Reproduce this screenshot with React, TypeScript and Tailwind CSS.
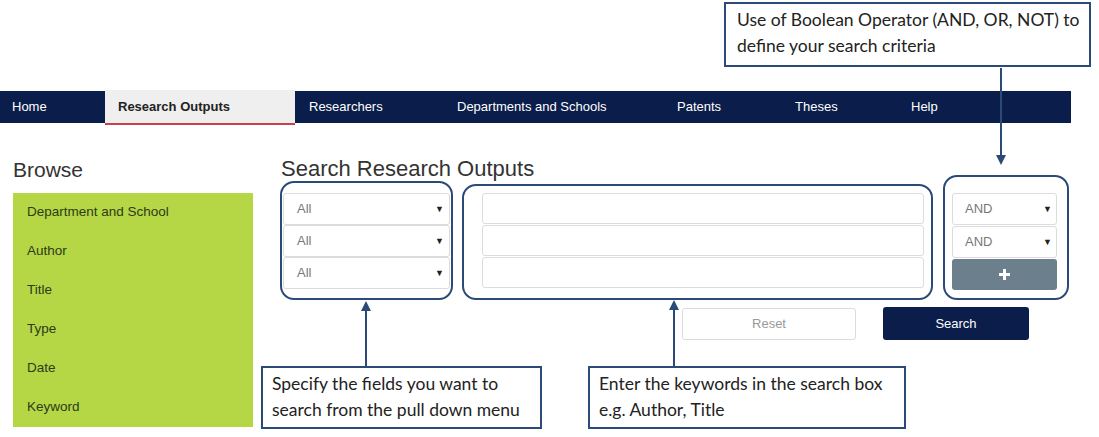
import React from "react";

const navItems = [
  { label: "Home", w: 105, pl: 12 },
  { label: "Research Outputs", w: 190, pl: 13, active: true },
  { label: "Researchers", w: 148, pl: 14 },
  { label: "Departments and Schools", w: 224, pl: 14 },
  { label: "Patents", w: 118, pl: 10 },
  { label: "Theses", w: 116, pl: 10 },
  { label: "Help", w: 156, pl: 10 },
];

const browse = ["Department and School", "Author", "Title", "Type", "Date", "Keyword"];

function Caret() {
  return <span className="text-[9px] text-[#222] leading-none">▼</span>;
}

function SelectRow({ label, pl = "pl-[13px]", pr = "pr-[5px]" }: { label: string; pl?: string; pr?: string }) {
  return (
    <div className={`h-[32px] flex items-center justify-between ${pl} ${pr} bg-white border border-[#dcdcdc] rounded-[3px] text-[13px] text-[#777]`}>
      <span>{label}</span>
      <Caret />
    </div>
  );
}

function ArrowUp({ x, y1, y2 }: { x: number; y1: number; y2: number }) {
  return (
    <svg className="absolute left-0 top-0 pointer-events-none" width="1099" height="437">
      <line x1={x} y1={y2} x2={x} y2={y1 + 8} stroke="#2b4a78" strokeWidth="2" />
      <polygon points={`${x - 5},${y1 + 10} ${x + 5},${y1 + 10} ${x},${y1}`} fill="#2b4a78" />
    </svg>
  );
}

export default function App() {
  return (
    <div className="relative w-[1099px] h-[437px] bg-white overflow-hidden" style={{ fontFamily: '"Liberation Sans", Arial, sans-serif' }}>
      <div className="h-[91px]" />

      {/* nav */}
      <div className="w-[1071px] h-[32px] bg-[#0b1d4a] flex items-start">
        {navItems.map((n) => (
          <div
            key={n.label}
            className={
              n.active
                ? "h-[35px] -mt-[1px] bg-[#efefef] border-b-[2px] border-[#c8414b] flex items-center text-[13px] font-bold text-[#222]"
                : "h-[32px] flex items-center text-[13px] text-white"
            }
            style={{ width: n.w, paddingLeft: n.pl }}
          >
            {n.label}
          </div>
        ))}
      </div>

      {/* main */}
      <div className="flex mt-[33px]">
        {/* sidebar */}
        <div className="ml-[13px] w-[240px]">
          <div className="h-[37px] text-[21px] text-[#333] leading-[28px]">Browse</div>
          <div className="bg-[#b5d645] h-[234px] flex flex-col">
            {browse.map((b) => (
              <div key={b} className="h-[39px] flex items-center pl-[14px] text-[13.5px] text-[#2d3a1a]">
                {b}
              </div>
            ))}
          </div>
        </div>

        {/* search area */}
        <div className="ml-[27px] flex flex-col">
          <div className="h-[19px] pl-[1px] text-[22px] text-[#333] leading-[26px] whitespace-nowrap">Search Research Outputs</div>
          <div className="flex items-start">
            <div className="mt-[6px] w-[173px] h-[119px] border-2 border-[#2b4a78] rounded-[14px] pt-[10px] px-[1px] flex flex-col">
              <SelectRow label="All" />
              <SelectRow label="All" />
              <SelectRow label="All" />
            </div>
            <div className="ml-[9px] mt-[9px] w-[471px] h-[116px] border-2 border-[#2b4a78] rounded-[14px] pt-[7px] pl-[18px] pr-[7px] flex flex-col gap-[1px]">
              <div className="h-[31px] bg-white border border-[#dcdcdc] rounded-[3px]" />
              <div className="h-[31px] bg-white border border-[#dcdcdc] rounded-[3px]" />
              <div className="h-[31px] bg-white border border-[#dcdcdc] rounded-[3px]" />
            </div>
            <div className="ml-[10px] w-[126px] h-[125px] border-2 border-[#2b4a78] rounded-[14px] pt-[16px] pl-[7px] pr-[10px] flex flex-col gap-[1px]">
              <SelectRow label="AND" pl="pl-[12px]" pr="pr-[4px]" />
              <SelectRow label="AND" pl="pl-[12px]" pr="pr-[4px]" />
              <div className="h-[31px] bg-[#6c7f8c] rounded-[3px] flex items-center justify-center">
                <svg width="11" height="11" viewBox="0 0 11 11">
                  <rect x="4" y="0" width="3" height="11" fill="#fff" />
                  <rect x="0" y="4" width="11" height="3" fill="#fff" />
                </svg>
              </div>
            </div>
          </div>
          <div className="flex mt-[8px]">
            <div className="ml-[402px] w-[174px] h-[32px] border border-[#dcdcdc] rounded-[3px] flex items-center justify-center text-[13px] text-[#999]">
              Reset
            </div>
            <div className="ml-[27px] -mt-[1px] w-[146px] h-[33px] bg-[#0b1d4a] rounded-[3px] flex items-center justify-center text-[13px] text-white">
              Search
            </div>
          </div>
        </div>
      </div>

      {/* annotations */}
      <ArrowUp x={366} y1={301} y2={366} />
      <ArrowUp x={674} y1={300} y2={366} />
      <svg className="absolute left-0 top-0 pointer-events-none" width="1099" height="437">
        <line x1={1001} y1={68} x2={1001} y2={157} stroke="#2b4a78" strokeWidth="2" />
        <polygon points="996,155 1006,155 1001,165" fill="#2b4a78" />
      </svg>

      <div
        className="absolute left-[724px] top-[2px] w-[367px] h-[65px] border-2 border-[#2b4a78] bg-white pl-[11px] pt-[3px] text-[17.5px] leading-[26px] text-[#222] whitespace-nowrap"
        style={{ fontFamily: 'Lato, "Open Sans", sans-serif' }}
      >
        Use of Boolean Operator (AND, OR, NOT) to
        <br />
        define your search criteria
      </div>
      <div
        className="absolute left-[261px] top-[366px] w-[281px] h-[63px] border-2 border-[#2b4a78] bg-white pl-[9px] pt-[3px] text-[17.5px] leading-[26px] text-[#222] whitespace-nowrap"
        style={{ fontFamily: 'Lato, "Open Sans", sans-serif' }}
      >
        Specify the fields you want to
        <br />
        search from the pull down menu
      </div>
      <div
        className="absolute left-[588px] top-[366px] w-[318px] h-[63px] border-2 border-[#2b4a78] bg-white pl-[9px] pt-[3px] text-[17.5px] leading-[26px] text-[#222] whitespace-nowrap"
        style={{ fontFamily: 'Lato, "Open Sans", sans-serif' }}
      >
        Enter the keywords in the search box
        <br />
        e.g. Author, Title
      </div>
    </div>
  );
}
